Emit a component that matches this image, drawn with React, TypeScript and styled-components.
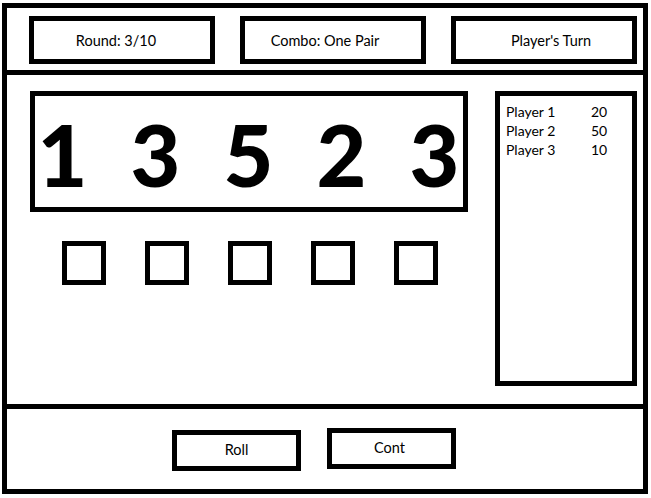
import React from "react";
import styled, { createGlobalStyle } from "styled-components";

const GlobalStyle = createGlobalStyle`
  html, body { margin: 0; padding: 0; background: #ffffff; }
  body { font-family: Lato, "Open Sans", sans-serif; color: #000; }
  * { box-sizing: border-box; }
`;

const Frame = styled.div`
  margin: 3px 0 0 2px;
  width: 646px;
  height: 491px;
  border: 5px solid #000;
  display: flex;
  flex-direction: column;
  background: #fff;
`;

const Header = styled.header`
  height: 67px;
  border-bottom: 5px solid #000;
  display: flex;
  align-items: flex-start;
  gap: 25px;
  padding: 8px 6px 0 22px;
`;

const InfoBox = styled.div<{ $offset: number }>`
  width: 186px;
  height: 48px;
  border: 5px solid #000;
  display: flex;
  align-items: center;
  justify-content: center;
  font-family: Lato, sans-serif;
  font-size: 14.5px;
  padding-left: ${(p) => Math.max(0, p.$offset * 2)}px;
  padding-right: ${(p) => Math.max(0, -p.$offset * 2)}px;
`;

const Main = styled.main`
  height: 334px;
  border-bottom: 5px solid #000;
  display: flex;
  align-items: flex-start;
  gap: 27px;
  padding: 16px 6px 0 23px;
`;

const LeftColumn = styled.div`
  width: 438px;
  display: flex;
  flex-direction: column;
  gap: 29px;
`;

const DiceBox = styled.div`
  height: 121px;
  border: 5px solid #000;
  display: flex;
  align-items: flex-start;
  gap: 38px;
  padding-top: 15px;
`;

const Die = styled.span`
  width: 55px;
  text-align: center;
  font-family: Lato, sans-serif;
  font-weight: 900;
  font-size: 86px;
  line-height: 1;
`;

const HoldRow = styled.div`
  display: flex;
  gap: 39px;
  padding-left: 32px;
`;

const HoldBox = styled.div`
  width: 44px;
  height: 44px;
  border: 5px solid #000;
`;

const ScorePanel = styled.aside`
  width: 142px;
  height: 295px;
  border: 5px solid #000;
  padding: 6px 0 0 6px;
  display: flex;
  flex-direction: column;
`;

const ScoreRow = styled.div`
  display: flex;
  font-family: Lato, sans-serif;
  font-size: 14px;
  line-height: 19px;
`;

const PlayerName = styled.span`
  width: 85px;
`;

const Footer = styled.footer`
  flex: 1;
  display: flex;
  align-items: flex-start;
  gap: 26px;
  padding-left: 165px;
`;

const Button = styled.button<{ $top: number; $offset: number }>`
  margin-top: ${(p) => p.$top}px;
  width: 129px;
  height: 41px;
  border: 5px solid #000;
  background: #fff;
  font-family: Lato, sans-serif;
  font-size: 14.5px;
  color: #000;
  padding: 0 ${(p) => Math.max(0, p.$offset * 2)}px 2px ${(p) => Math.max(0, -p.$offset * 2)}px;
  display: flex;
  align-items: center;
  justify-content: center;
  cursor: pointer;
`;

const dice = [1, 3, 5, 2, 3];
const scores = [
  { name: "Player 1", score: 20 },
  { name: "Player 2", score: 50 },
  { name: "Player 3", score: 10 },
];

export default function App() {
  return (
    <>
      <GlobalStyle />
      <Frame>
        <Header>
          <InfoBox $offset={-6}>Round: 3/10</InfoBox>
          <InfoBox $offset={-8}>Combo: One Pair</InfoBox>
          <InfoBox $offset={7}>Player's Turn</InfoBox>
        </Header>
        <Main>
          <LeftColumn>
            <DiceBox>
              {dice.map((d, i) => (
                <Die key={i}>{d}</Die>
              ))}
            </DiceBox>
            <HoldRow>
              {dice.map((_, i) => (
                <HoldBox key={i} />
              ))}
            </HoldRow>
          </LeftColumn>
          <ScorePanel>
            {scores.map((s) => (
              <ScoreRow key={s.name}>
                <PlayerName>{s.name}</PlayerName>
                <span>{s.score}</span>
              </ScoreRow>
            ))}
          </ScorePanel>
        </Main>
        <Footer>
          <Button $top={21} $offset={0}>Roll</Button>
          <Button $top={19} $offset={2}>Cont</Button>
        </Footer>
      </Frame>
    </>
  );
}
